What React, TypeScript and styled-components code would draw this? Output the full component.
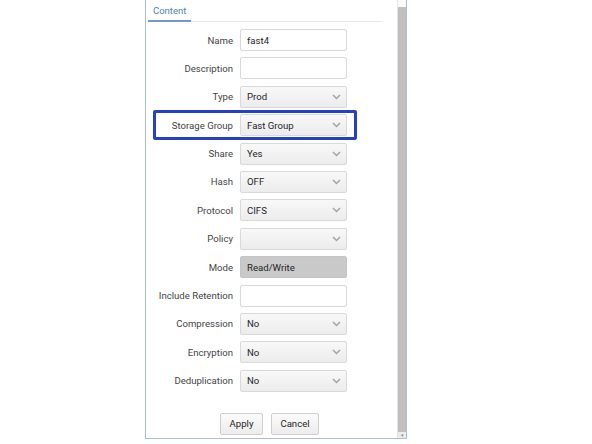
import React from "react"
import styled, {createGlobalStyle} from "styled-components"

const GlobalStyle = createGlobalStyle`
  html, body {
    margin: 0;
    padding: 0;
    background: #ffffff;
  }
  body {
    font-family: Roboto, "Liberation Sans", Arial, sans-serif;
  }
`

const Page = styled.div`
  width: 592px;
  height: 444px;
  overflow: hidden;
  background: #fff;
`

const Panel = styled.div`
  margin-left: 145px;
  width: 260px;
  height: 438px;
  border: 1px solid #a8bfdc;
  border-top: none;
  display: flex;
  background: #fff;
`

const Body = styled.div`
  flex: 1;
  display: flex;
  flex-direction: column;
`

const TabBar = styled.div`
  height: 21px;
  margin: 0 15px 0 2px;
  border-bottom: 1px solid #e8e8e8;
  display: flex;
  align-items: flex-end;
`

const Tab = styled.div`
  font-size: 9.5px;
  color: #4d82b8;
  padding: 0 5px 4px 5px;
  border-bottom: 2px solid #6f9bc6;
  margin-bottom: -1px;
`

const Form = styled.div`
  display: flex;
  flex-direction: column;
  gap: 6.4px;
  padding-top: 7px;
  padding-left: 8px;
`

const Row = styled.div<{$highlight?: boolean}>`
  display: grid;
  grid-template-columns: 79px 107px;
  column-gap: 7px;
  align-items: center;
  height: 22px;
  position: relative;
  ${p => p.$highlight && `
    &::before {
      content: "";
      position: absolute;
      left: -1px;
      top: -4px;
      width: 198px;
      height: 24px;
      border: 3px solid #2640c4;
      border-radius: 2px;
      pointer-events: none;
    }
  `}
`

const Label = styled.div`
  text-align: right;
  font-size: 9.6px;
  color: #444444;
  white-space: nowrap;
`

const Field = styled.div<{$kind: "text" | "select" | "readonly"}>`
  box-sizing: border-box;
  height: 22px;
  border: 1px solid ${p => (p.$kind === "readonly" ? "#c4c4c4" : "#d9d9d9")};
  border-radius: 2px;
  background: ${p =>
    p.$kind === "select"
      ? "linear-gradient(#f8f8f8, #ececec)"
      : p.$kind === "readonly"
      ? "#c9c9c9"
      : "#ffffff"};
  display: flex;
  align-items: center;
  justify-content: space-between;
  padding: 0 5px 0 6px;
  font-size: 9.6px;
  color: #262626;
`

const Chevron = () => (
  <svg width="9" height="6" viewBox="0 0 9 6">
    <path d="M1 1 L4.5 4.5 L8 1" fill="none" stroke="#a3a3a3" strokeWidth="1.5" />
  </svg>
)

const Buttons = styled.div`
  display: flex;
  gap: 8px;
  margin-top: 21px;
  padding-left: 74px;
`

const Button = styled.div<{$w: number}>`
  box-sizing: border-box;
  width: ${p => p.$w}px;
  height: 22px;
  border: 1px solid #cfcfcf;
  border-radius: 2px;
  background: linear-gradient(#fbfbfb, #ececec);
  display: flex;
  align-items: center;
  justify-content: center;
  font-size: 9.6px;
  color: #262626;
`

const Scrollbar = styled.div`
  width: 8px;
  display: flex;
  flex-direction: column;
  border-left: 1px solid #e4e4e4;
`

const ScrollCap = styled.div`
  height: 7px;
  background: #fafafa;
`

const ScrollThumb = styled.div`
  flex: 1;
  background: #c3bfbf;
`

const ScrollArrow = styled.div`
  height: 6px;
  background: #ececec;
  color: #888;
  font-size: 5px;
  line-height: 6px;
  text-align: center;
`

type FieldDef = {label: string; kind: "text" | "select" | "readonly"; value?: string; highlight?: boolean}

const fields: FieldDef[] = [
  {label: "Name", kind: "text", value: "fast4"},
  {label: "Description", kind: "text"},
  {label: "Type", kind: "select", value: "Prod"},
  {label: "Storage Group", kind: "select", value: "Fast Group", highlight: true},
  {label: "Share", kind: "select", value: "Yes"},
  {label: "Hash", kind: "select", value: "OFF"},
  {label: "Protocol", kind: "select", value: "CIFS"},
  {label: "Policy", kind: "select"},
  {label: "Mode", kind: "readonly", value: "Read/Write"},
  {label: "Include Retention", kind: "text"},
  {label: "Compression", kind: "select", value: "No"},
  {label: "Encryption", kind: "select", value: "No"},
  {label: "Deduplication", kind: "select", value: "No"},
]

function App() {
  return (
    <Page>
      <GlobalStyle />
      <Panel>
        <Body>
          <TabBar>
            <Tab>Content</Tab>
          </TabBar>
          <Form>
            {fields.map(f => (
              <Row key={f.label} $highlight={f.highlight}>
                <Label>{f.label}</Label>
                <Field $kind={f.kind}>
                  <span>{f.value}</span>
                  {f.kind === "select" && <Chevron />}
                </Field>
              </Row>
            ))}
          </Form>
          <Buttons>
            <Button $w={43}>Apply</Button>
            <Button $w={48}>Cancel</Button>
          </Buttons>
        </Body>
        <Scrollbar>
          <ScrollCap />
          <ScrollThumb />
          <ScrollArrow>▾</ScrollArrow>
        </Scrollbar>
      </Panel>
    </Page>
  )
}

export default App
